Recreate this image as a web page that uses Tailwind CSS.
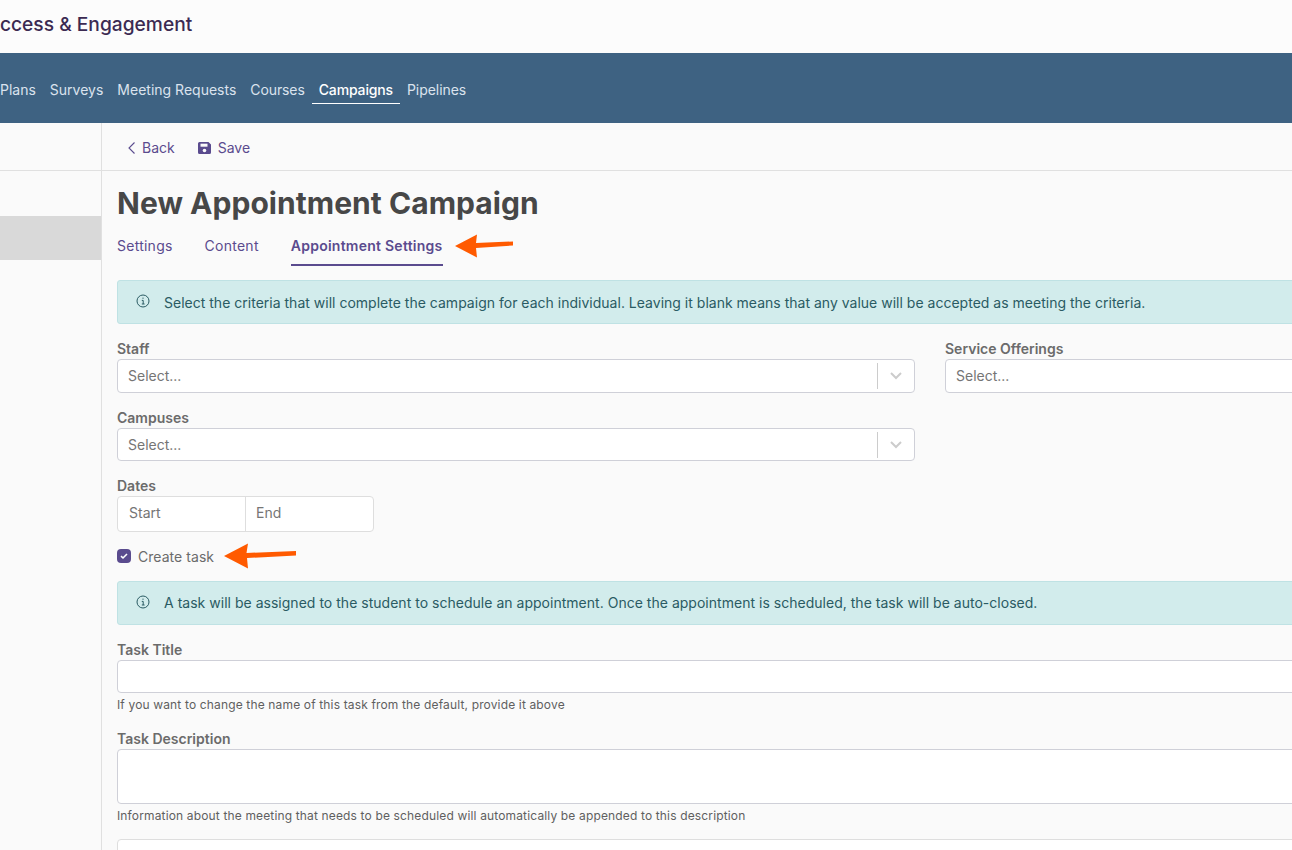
<!DOCTYPE html>
<html><head><meta charset="utf-8">
<script src="https://cdn.jsdelivr.net/npm/@tailwindcss/browser@4"></script>
</head>
<body class="bg-[#fafafa] overflow-hidden">
<div class="w-[1292px] h-[850px] overflow-hidden flex flex-col font-['Inter',sans-serif] text-[#6b6b6b]">
  <header class="h-[53px] shrink-0 bg-[#fcfcfc] flex items-center overflow-hidden">
    <span class="ml-[-24px] text-[19.2px] font-medium text-[#3b2a52] whitespace-nowrap font-['Inter',sans-serif] pb-[4px]">Success &amp; Engagement</span>
  </header>
  <nav class="h-[70px] shrink-0 bg-[#3e6282] flex items-start overflow-hidden text-[14px] text-[#dbe3ee]">
    <div class="flex pt-[24px] ml-[-7px]">
      <a class="px-[7px] h-[27px] leading-[26px]">Plans</a>
      <a class="px-[7px] h-[27px] leading-[26px]">Surveys</a>
      <a class="px-[7px] h-[27px] leading-[26px]">Meeting Requests</a>
      <a class="px-[7px] h-[27px] leading-[26px] tracking-[-0.1px]">Courses</a>
      <a class="px-[7px] h-[27px] leading-[26px] text-white font-medium border-b border-white tracking-[-0.15px]">Campaigns</a>
      <a class="px-[7px] h-[27px] leading-[26px] tracking-[-0.05px]">Pipelines</a>
    </div>
  </nav>
  <div class="flex flex-1 min-h-0">
    <aside class="w-[102px] shrink-0 border-r border-[#e0e0e0] flex flex-col">
      <div class="h-[48px] border-b border-[#e0e0e0]"></div>
      <div class="h-[45px]"></div>
      <div class="h-[44px] bg-[#d9d9d9]"></div>
    </aside>
    <main class="flex-1 min-w-0 flex flex-col">
      <div class="h-[48px] shrink-0 border-b border-[#e0e0e0] flex items-center pl-[25px] pt-[2px] text-[14px] text-[#5a4b8e]">
        <svg class="w-[10px] h-[14px] mr-[5px]" viewBox="0 0 10 14" fill="none" stroke="#5a4b8e" stroke-width="1.1"><path d="M7.5 1.5 2 7l5.5 5.5"/></svg>
        <span>Back</span>
        <svg class="w-[14px] h-[14px] ml-[23px] mr-[6px]" viewBox="0 0 14 14"><path fill="#5a4b8e" d="M1.5 1h9L13 3.5V11.5A1.5 1.5 0 0 1 11.5 13h-10A1.5 1.5 0 0 1 0 11.5v-9A1.5 1.5 0 0 1 1.5 1Z"/><rect x="2.5" y="2.7" width="7" height="3" fill="#fafafa"/><circle cx="6.5" cy="9.5" r="1.8" fill="#fafafa"/></svg>
        <span>Save</span>
      </div>
      <div class="pl-[15px] overflow-hidden flex-1">
        <h1 class="text-[30px] font-bold text-[#474747] leading-[36px] mt-[14px] whitespace-nowrap tracking-[0.04px]">New Appointment Campaign</h1>
        <div class="flex gap-[32px] mt-[8px] text-[14px] text-[#5a4b8e] h-[37px] tracking-[0.25px]">
          <a class="leading-[34px]">Settings</a>
          <a class="leading-[34px]">Content</a>
          <div class="flex items-start">
            <a class="leading-[34px] font-semibold border-b-2 border-[#5a4b8e] h-[37px]">Appointment Settings</a>
            <svg class="w-[62px] h-[28px] ml-[9px] mt-[3px]" viewBox="0 0 62 28"><path fill="#ff5a00" d="M3 14 25 2.5 24 11 61 9.5 61 13.5 24 16 25 25.5Z"/></svg>
          </div>
        </div>
        <div class="w-[1200px] h-[44px] mt-[14px] bg-[#d2ecec] border border-[#bfe2e4] rounded-[3px] flex items-center pl-[18px] text-[14px] text-[#2a5b63] whitespace-nowrap tracking-[0.01px]">
          <svg class="w-[14px] h-[14px] mr-[14px] mb-[2px]" viewBox="0 0 14 14" fill="none" stroke="#2a5b63"><circle cx="7" cy="7" r="6"/><path d="M5.8 6.4H7.2V10M5.8 10H8.6M7 3.6v1.2"/></svg>
          Select the criteria that will complete the campaign for each individual. Leaving it blank means that any value will be accepted as meeting the criteria.
        </div>
        <div class="grid grid-cols-[798px_798px] gap-x-[30px] mt-[16px] w-[1700px]">
          <div>
            <label class="block text-[14px] font-semibold leading-[18px]">Staff</label>
            <div class="h-[34px] mt-[1px] bg-white border border-[#cfd0d8] rounded-[4px] flex items-center pl-[10px] text-[14px] text-[#757575]">
              <span class="flex-1 pb-[1px]">Select...</span>
              <span class="w-px h-[26px] bg-[#cccccc]"></span>
              <svg class="w-[36px] h-[20px]" viewBox="0 0 36 20" fill="none" stroke="#cccccc" stroke-width="2"><path d="M13 7l5 5 5-5"/></svg>
            </div>
          </div>
          <div>
            <label class="block text-[14px] font-semibold leading-[18px]">Service Offerings</label>
            <div class="h-[34px] mt-[1px] bg-white border border-[#cfd0d8] rounded-[4px] flex items-center pl-[10px] text-[14px] text-[#757575]">
              <span class="flex-1 pb-[1px]">Select...</span>
            </div>
          </div>
          <div class="mt-[16px]">
            <label class="block text-[14px] font-semibold leading-[18px]">Campuses</label>
            <div class="h-[33px] mt-[1px] bg-white border border-[#cfd0d8] rounded-[4px] flex items-center pl-[10px] text-[14px] text-[#757575]">
              <span class="flex-1">Select...</span>
              <span class="w-px h-[26px] bg-[#cccccc]"></span>
              <svg class="w-[36px] h-[20px]" viewBox="0 0 36 20" fill="none" stroke="#cccccc" stroke-width="2"><path d="M13 7l5 5 5-5"/></svg>
            </div>
          </div>
        </div>
        <label class="block text-[14px] font-semibold leading-[18px] mt-[16px]">Dates</label>
        <div class="w-[257px] h-[36px] mt-[1px] bg-white border border-[#dedede] rounded-[4px] flex items-center text-[14px] text-[#757575]">
          <span class="w-[128px] h-full pl-[11px] leading-[31px] border-r border-[#dedede]">Start</span>
          <span class="pl-[10px] leading-[31px] h-full">End</span>
        </div>
        <div class="flex items-center h-[20px] mt-[14px] text-[14px] tracking-[0.05px]">
          <span class="w-[14px] h-[14px] rounded-[4px] bg-[#5a4b8e] flex items-center justify-center mr-[7px]">
            <svg class="w-[8px] h-[8px]" viewBox="0 0 8 8" fill="none" stroke="white" stroke-width="1.6"><path d="M1 4.2 3 6l4-4"/></svg>
          </span>
          <span>Create task</span>
          <svg class="w-[74px] h-[26px] ml-[9px]" viewBox="0 0 74 26"><path fill="#ff5a00" d="M1 13 25 .5 23.5 10 73 8 73 12.5 24 15 25 25.5Z"/></svg>
        </div>
        <div class="w-[1200px] h-[44px] mt-[15px] bg-[#d2ecec] border border-[#bfe2e4] rounded-[3px] flex items-center pl-[18px] pb-[2px] text-[14px] text-[#2a5b63] whitespace-nowrap tracking-[0.02px]">
          <svg class="w-[14px] h-[14px] mr-[14px]" viewBox="0 0 14 14" fill="none" stroke="#2a5b63"><circle cx="7" cy="7" r="6"/><path d="M5.8 6.4H7.2V10M5.8 10H8.6M7 3.6v1.2"/></svg>
          A task will be assigned to the student to schedule an appointment. Once the appointment is scheduled, the task will be auto-closed.
        </div>
        <label class="block text-[14px] font-semibold leading-[18px] mt-[16px]">Task Title</label>
        <div class="w-[1200px] h-[33px] mt-[1px] bg-white border border-[#cfd0d8] rounded-[4px]"></div>
        <p class="text-[12px] leading-[16px] mt-[4px] text-[#5f5f5f] tracking-[0.15px]">If you want to change the name of this task from the default, provide it above</p>
        <label class="block text-[14px] font-semibold leading-[18px] mt-[17px]">Task Description</label>
        <div class="w-[1200px] h-[55px] mt-[1px] bg-white border border-[#cfd0d8] rounded-[4px]"></div>
        <p class="text-[12px] leading-[16px] mt-[4px] text-[#5f5f5f] tracking-[0.15px]">Information about the meeting that needs to be scheduled will automatically be appended to this description</p>
        <div class="w-[1200px] h-[40px] mt-[15px] bg-white border border-[#dedede] rounded-[4px]"></div>
      </div>
    </main>
  </div>
</div>
</body></html>
